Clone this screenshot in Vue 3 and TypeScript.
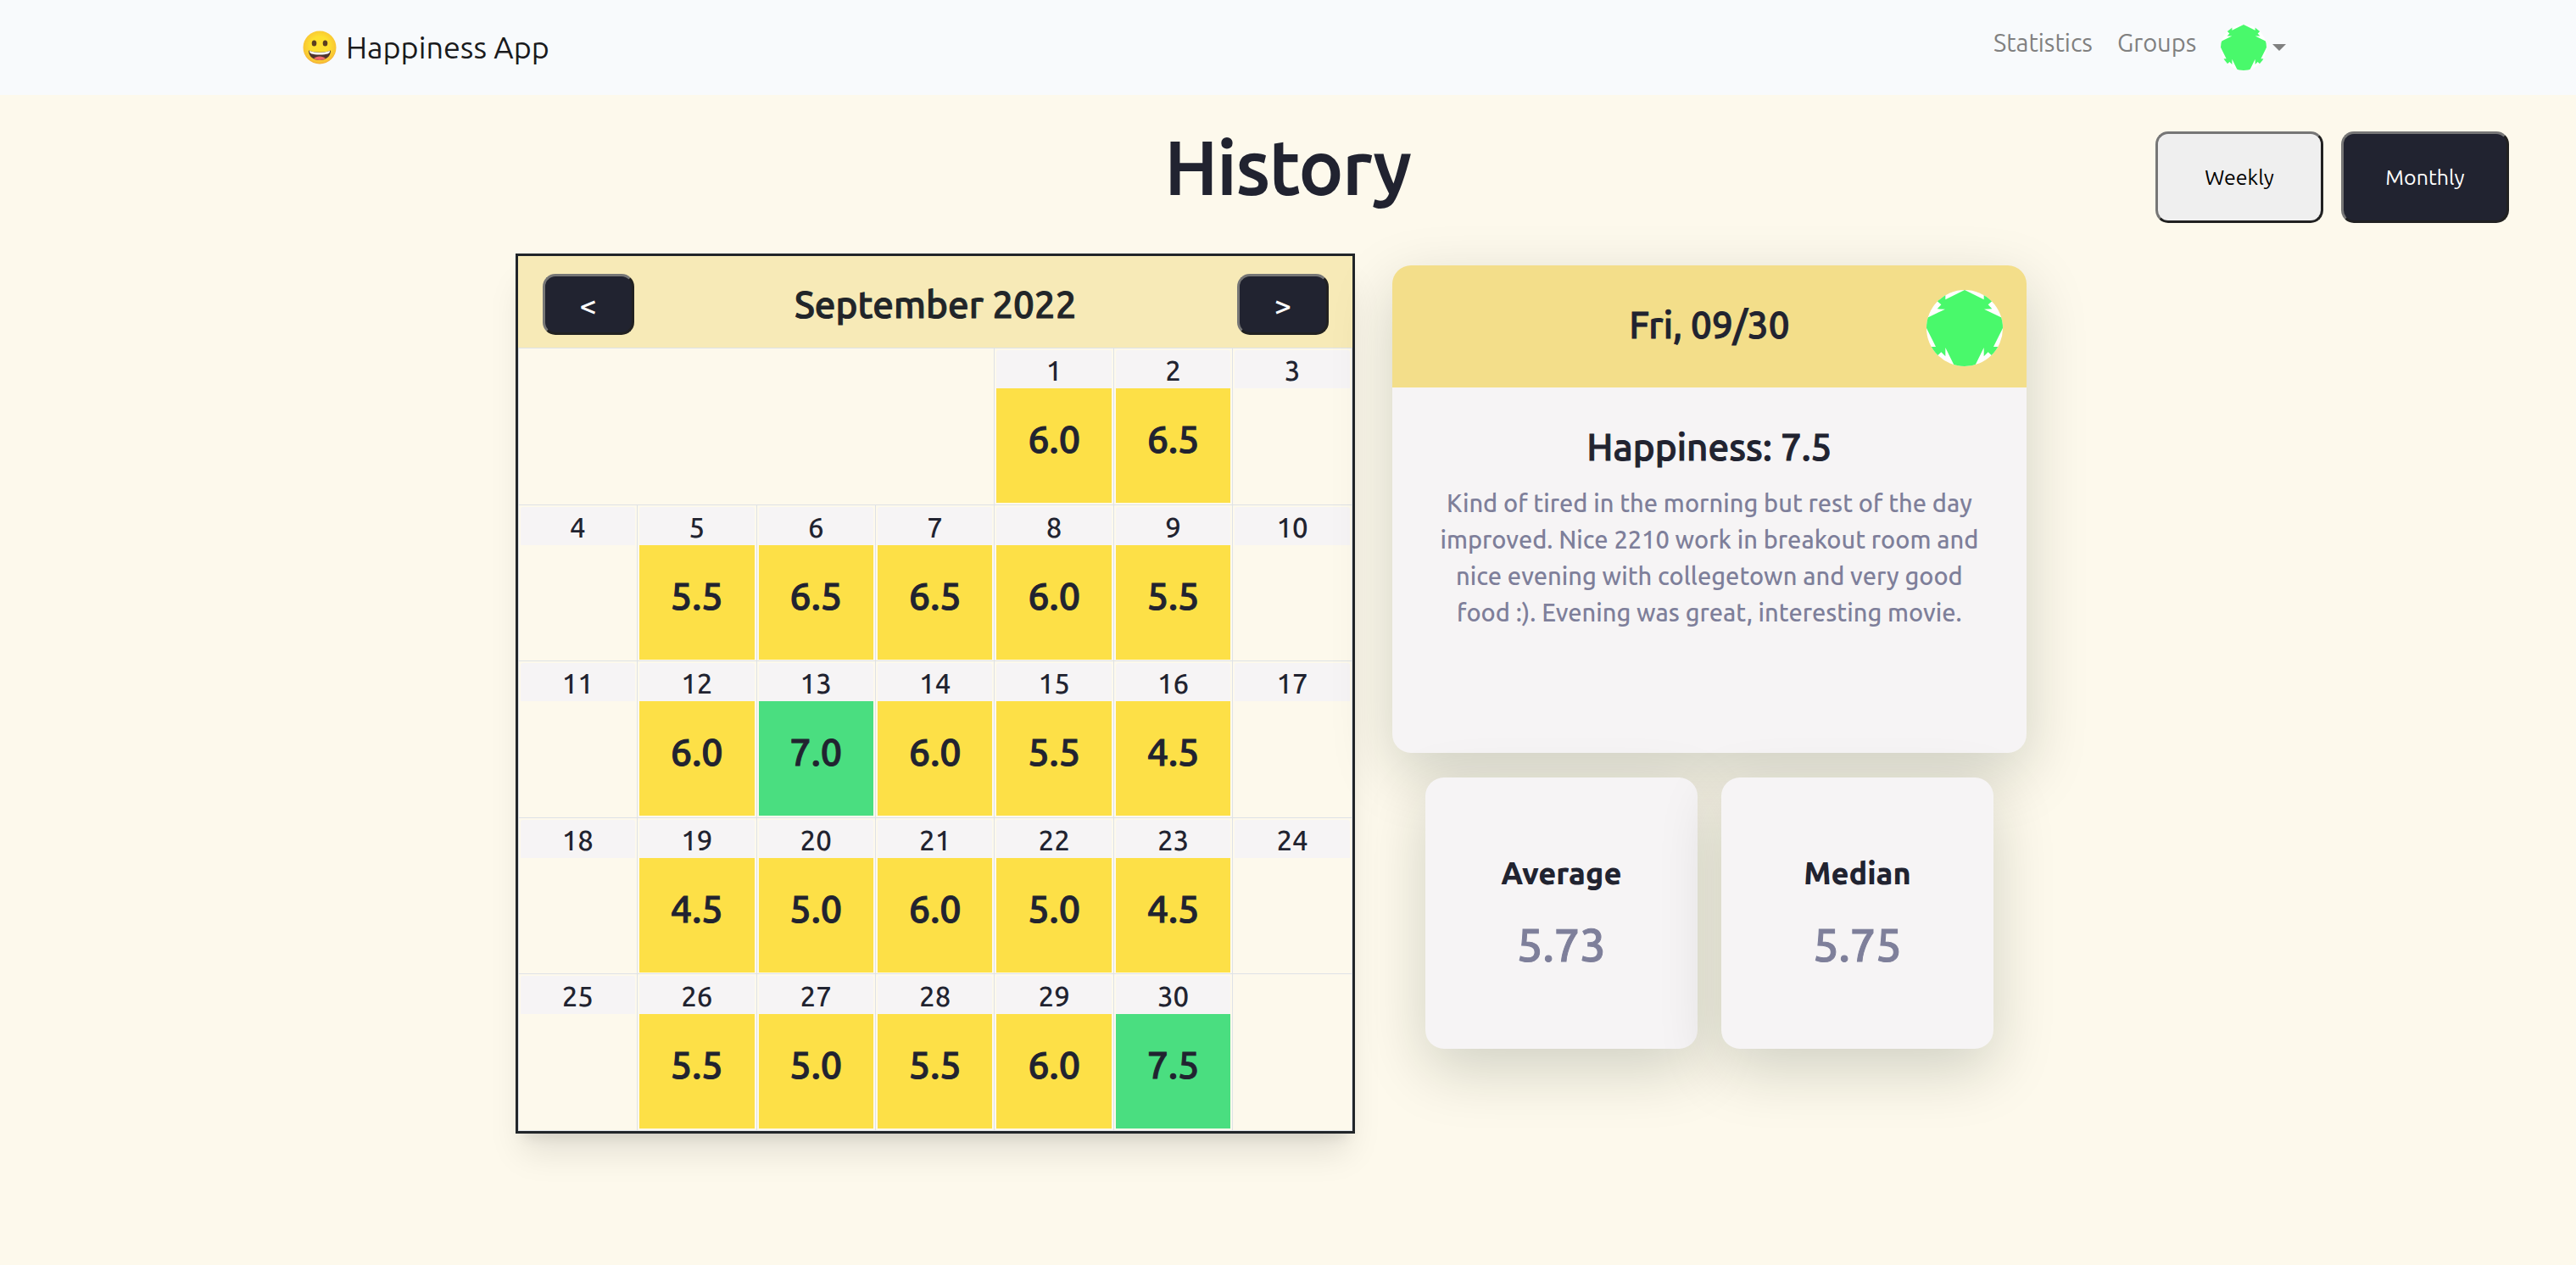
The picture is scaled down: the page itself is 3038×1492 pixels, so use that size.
<script setup lang="ts">
import { ref } from 'vue'

interface Day {
  date: number
  value?: string
}

const scores: Record<number, string> = {
  1: '6.0', 2: '6.5',
  5: '5.5', 6: '6.5', 7: '6.5', 8: '6.0', 9: '5.5',
  12: '6.0', 13: '7.0', 14: '6.0', 15: '5.5', 16: '4.5',
  19: '4.5', 20: '5.0', 21: '6.0', 22: '5.0', 23: '4.5',
  26: '5.5', 27: '5.0', 28: '5.5', 29: '6.0', 30: '7.5',
}

const leadingBlanks = 4
const daysInMonth = 30

function range(from: number, to: number): Day[] {
  const days: Day[] = []
  for (let d = from; d <= Math.min(to, daysInMonth); d++) days.push({ date: d, value: scores[d] })
  return days
}

const weeks: Day[][] = [range(1, 3), range(4, 10), range(11, 17), range(18, 24), range(25, 31)]

const stats = [
  { label: 'Average', value: '5.73' },
  { label: 'Median', value: '5.75' },
]

const view = ref<'weekly' | 'monthly'>('monthly')

const avatarShape =
  '135,0 203,34 203,0 250,20 230,41 218,52 232,67 204,68 275,102 270,135 237,201 270,201 250,250 ' +
  '218,220 203,235 203,204 168,275 102,275 67,204 67,235 52,220 20,250 0,201 33,201 0,135 -5,102 ' +
  '66,68 38,67 52,52 40,41 20,20 67,0 67,34'
</script>

<template>
  <div class="page">
    <nav class="navbar">
      <a class="brand" href="#">
        <svg class="emoji" viewBox="0 0 40 40" aria-hidden="true">
          <defs>
            <radialGradient id="face" cx="50%" cy="45%" r="55%">
              <stop offset="0.5" stop-color="#fde030" />
              <stop offset="0.9" stop-color="#f9c534" />
              <stop offset="1" stop-color="#f2a83a" />
            </radialGradient>
          </defs>
          <circle cx="20" cy="20" r="19.5" fill="url(#face)" />
          <ellipse cx="13.5" cy="15" rx="2.8" ry="3.5" fill="#5a3f20" />
          <ellipse cx="26.5" cy="15" rx="2.8" ry="3.5" fill="#5a3f20" />
          <path d="M7 23.500C15 26.500 25 26.500 33 23.500C33 31 27 35 20 35S7 31 7 23.500Z" fill="#4e342e" />
          <path d="M8 24C15 26.600 25 26.600 32 24C32.500 27 29 28.500 20 28.500S7.500 27 8 24Z" fill="#fff" />
          <path d="M13 33C16 29.500 24 29.500 27 33C23 35.500 17 35.500 13 33Z" fill="#f06a6a" />
        </svg>
        <span>Happiness App</span>
      </a>
      <div class="links">
        <a href="#statistics">Statistics</a>
        <a href="#groups">Groups</a>
        <button class="account" type="button" aria-label="Account menu">
          <svg class="avatar small" viewBox="0 0 270 270" aria-hidden="true">
            <clipPath id="clip-small"><circle cx="135" cy="135" r="135" /></clipPath>
            <g clip-path="url(#clip-small)">
              <rect width="270" height="270" fill="#fff" />
              <polygon :points="avatarShape" fill="#49f96b" />
            </g>
          </svg>
          <span class="caret"></span>
        </button>
      </div>
    </nav>

    <header class="heading">
      <h1>History</h1>
      <div class="toggle">
        <button type="button" class="btn" :class="{ dark: view === 'weekly' }" @click="view = 'weekly'">Weekly</button>
        <button type="button" class="btn" :class="{ dark: view === 'monthly' }" @click="view = 'monthly'">Monthly</button>
      </div>
    </header>

    <main class="content">
      <section class="calendar">
        <div class="month">
          <button type="button" class="btn dark step" aria-label="Previous month">&lt;</button>
          <h2>September 2022</h2>
          <button type="button" class="btn dark step" aria-label="Next month">&gt;</button>
        </div>
        <table>
          <colgroup><col v-for="n in 7" :key="n" /></colgroup>
          <tbody>
            <tr v-for="(week, i) in weeks" :key="i">
              <td v-if="i === 0" :colspan="leadingBlanks"></td>
              <td v-for="day in week" :key="day.date">
                <div class="date">{{ day.date }}</div>
                <div v-if="day.value" class="score" :class="{ high: Number(day.value) >= 7 }">{{ day.value }}</div>
              </td>
              <td v-if="i === weeks.length - 1"></td>
            </tr>
          </tbody>
        </table>
      </section>

      <section class="side">
        <article class="card entry">
          <header class="entry-head">
            <h2>Fri, 09/30</h2>
            <svg class="avatar large" viewBox="0 0 270 270" aria-hidden="true">
              <clipPath id="clip-large"><circle cx="135" cy="135" r="135" /></clipPath>
              <g clip-path="url(#clip-large)">
                <rect width="270" height="270" fill="#fff" />
                <polygon :points="avatarShape" fill="#49f96b" />
              </g>
            </svg>
          </header>
          <div class="entry-body">
            <h2>Happiness: 7.5</h2>
            <p>
              Kind of tired in the morning but rest of the day improved. Nice 2210 work in breakout room and nice
              evening with collegetown and very good food :). Evening was great, interesting movie.
            </p>
          </div>
        </article>
        <div class="stats">
          <article v-for="s in stats" :key="s.label" class="card stat">
            <h3>{{ s.label }}</h3>
            <p>{{ s.value }}</p>
          </article>
        </div>
      </section>
    </main>
  </div>
</template>

<style>
html,
body {
  margin: 0;
  background: #fdf9ec;
}
</style>

<style scoped>
.page {
  font-family: Ubuntu, 'Noto Sans', sans-serif;
  color: #212330;
}

h1,
h2,
h3,
p {
  margin: 0;
}

h2 {
  font-size: 44px;
  font-weight: 500;
  line-height: 54px;
  text-align: center;
  -webkit-text-stroke: 1px currentColor;
}

a {
  color: inherit;
  text-decoration: none;
}

button {
  font-family: inherit;
  cursor: pointer;
}

.navbar {
  display: flex;
  align-items: center;
  justify-content: space-between;
  height: 112px;
  padding: 0 11.25% 0 11.75%;
  background: #f8fafc;
}

.brand {
  display: flex;
  align-items: center;
  gap: 11px;
  font-size: 36px;
  line-height: 54px;
  color: #1a1a1c;
}

.emoji {
  width: 40px;
  height: 40px;
}

.links {
  display: flex;
  align-items: flex-start;
  gap: 29px;
  font-size: 29px;
  line-height: 42px;
  color: #808080;
}

.account {
  display: flex;
  align-items: center;
  gap: 7px;
  padding: 0;
  border: 0;
  background: none;
  color: inherit;
}

.avatar {
  display: block;
}

.small {
  width: 54px;
  height: 54px;
}

.large {
  width: 90px;
  height: 90px;
}

.caret {
  border: 8px solid transparent;
  border-top-color: currentColor;
  border-bottom-width: 0;
}

.heading {
  display: grid;
  grid-template-columns: 1fr auto 1fr;
  align-items: start;
  padding: 32px 79px 36px;
}

h1 {
  grid-column: 2;
  font-size: 87px;
  font-weight: 500;
  line-height: 106px;
  -webkit-text-stroke: 2px currentColor;
}

.toggle {
  display: flex;
  justify-content: flex-end;
  gap: 21px;
  padding-top: 11px;
}

.btn {
  width: 198px;
  height: 108px;
  padding: 0;
  border: 3px solid;
  border-color: #767676 #212121 #212121 #767676;
  border-radius: 15px;
  background: #efefef;
  color: #000;
  font-size: 25px;
}

.btn.dark {
  background: #212330;
  color: #fff;
}

.btn.step {
  width: 108px;
  height: 72px;
  font-size: 36px;
  font-weight: 500;
}

.content {
  display: grid;
  grid-template-columns: 990fr 748fr;
  align-items: start;
  gap: 44px;
  padding: 0 21.33% 90px 20%;
}

.calendar {
  border: 3px solid #212529;
  box-shadow: 0 30px 38px -8px rgba(0, 0, 0, 0.1), 0 12px 15px -9px rgba(0, 0, 0, 0.1);
}

.month {
  display: flex;
  align-items: center;
  justify-content: space-between;
  padding: 21px 28px 15px 29px;
  background: #f7eab7;
  color: #212529;
}

table {
  width: 100%;
  height: 924px;
  table-layout: fixed;
  border-collapse: collapse;
}

td {
  padding: 2px 2px 1px;
  border: 1px solid #dee2e6;
  vertical-align: top;
  text-align: center;
  font-weight: 500;
}

.date {
  padding-top: 3px;
  border-radius: 3px 3px 0 0;
  background: #f6f4f5;
  font-size: 33px;
  line-height: 42px;
}

.score {
  padding-bottom: 15px;
  background: #fde047;
  font-size: 45px;
  line-height: 120px;
  -webkit-text-stroke: 1px currentColor;
}

.score.high {
  background: #4ade80;
}

.side {
  padding-top: 14px;
}

.card {
  border-radius: 22px;
  background: #f6f4f5;
  box-shadow: 0 24px 72px rgba(0, 25, 10, 0.18);
  text-align: center;
}

.entry-head {
  display: grid;
  grid-template-columns: 1fr auto 1fr;
  align-items: start;
  padding: 29px 28px 25px;
  border-radius: 22px 22px 0 0;
  background: #f3de8a;
}

.entry-head h2 {
  grid-column: 2;
  padding-top: 14px;
}

.entry-head .avatar {
  justify-self: end;
}

.entry-body {
  min-height: 388px;
  padding: 43px 48px 0;
}

.entry-body p {
  padding-top: 18px;
  font-size: 29px;
  font-weight: 500;
  line-height: 43px;
  color: #7e7f9a;
}

.stats {
  display: grid;
  grid-template-columns: 1fr 1fr;
  gap: 28px;
  padding: 29px 39px 0;
}

.stat {
  padding: 86px 0 87px;
}

.stat h3 {
  font-size: 36px;
  font-weight: 800;
  line-height: 54px;
}

.stat p {
  padding-top: 22px;
  font-size: 54px;
  font-weight: 500;
  line-height: 71px;
  color: #7e7f9a;
  -webkit-text-stroke: 1px currentColor;
}
</style>
